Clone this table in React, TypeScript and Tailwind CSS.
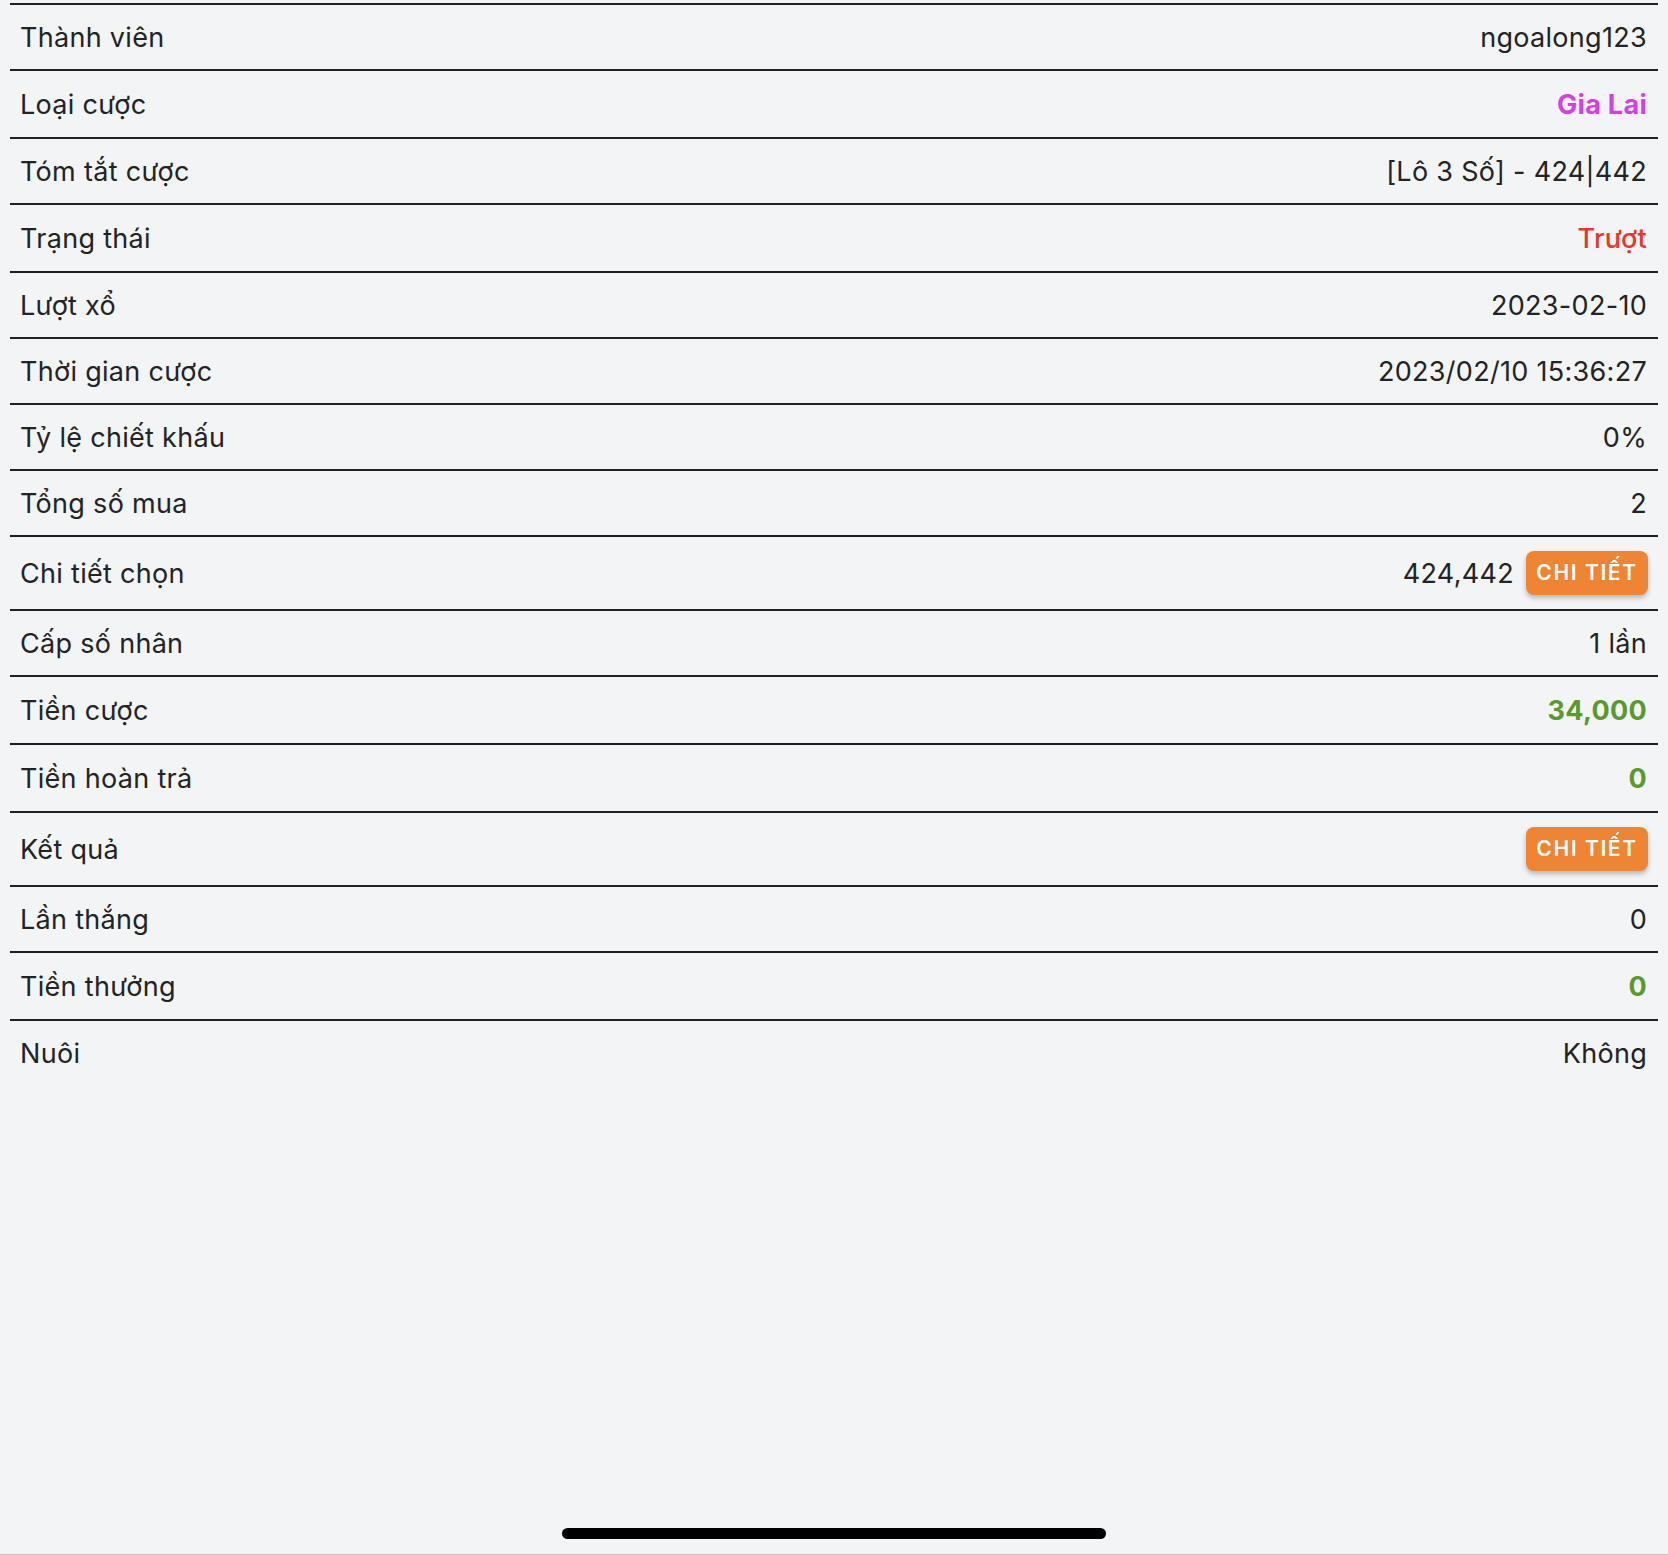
import React from "react";

type Row = {
  label: string;
  value?: string;
  valueClass?: string;
  button?: boolean;
  h: string;
};

const rows: Row[] = [
  { label: "Thành viên", value: "ngoalong123", h: "h-[66px]" },
  { label: "Loại cược", value: "Gia Lai", valueClass: "font-bold text-[#d83ee6]", h: "h-[68px]" },
  { label: "Tóm tắt cược", value: "[Lô 3 Số] - 424|442", h: "h-[66px]" },
  { label: "Trạng thái", value: "Trượt", valueClass: "font-medium text-[#e6392c]", h: "h-[68px]" },
  { label: "Lượt xổ", value: "2023-02-10", h: "h-[66px]" },
  { label: "Thời gian cược", value: "2023/02/10 15:36:27", h: "h-[66px]" },
  { label: "Tỷ lệ chiết khấu", value: "0%", h: "h-[66px]" },
  { label: "Tổng số mua", value: "2", h: "h-[66px]" },
  { label: "Chi tiết chọn", value: "424,442", button: true, h: "h-[74px]" },
  { label: "Cấp số nhân", value: "1 lần", h: "h-[66px]" },
  { label: "Tiền cược", value: "34,000", valueClass: "font-bold text-[#5a9a2c]", h: "h-[68px]" },
  { label: "Tiền hoàn trả", value: "0", valueClass: "font-bold text-[#5a9a2c]", h: "h-[68px]" },
  { label: "Kết quả", button: true, h: "h-[74px]" },
  { label: "Lần thắng", value: "0", h: "h-[66px]" },
  { label: "Tiền thưởng", value: "0", valueClass: "font-bold text-[#5a9a2c]", h: "h-[68px]" },
  { label: "Nuôi", value: "Không", h: "h-[66px]" },
];

export default function App() {
  return (
    <div
      className="w-[1668px] h-[1555px] bg-[#f3f4f6] flex flex-col text-[#222326] border-b border-[#c4c4c4]"
      style={{ fontFamily: "Inter, 'Noto Sans', sans-serif" }}
    >
      <div className="px-[10px] pt-[3px]">
        {rows.map((r, i) => (
          <div
            key={i}
            className={`flex items-center justify-between border-t-2 border-[#1f2024] pl-[10px] pr-[11px] ${r.h}`}
          >
            <span className="text-[27px] leading-none tracking-[0.3px]">{r.label}</span>
            <div className="flex items-center gap-[12px]">
              {r.value !== undefined && (
                <span className={`text-[27px] leading-none tracking-[0.3px] ${r.valueClass ?? ""}`}>{r.value}</span>
              )}
              {r.button && (
                <button className="h-[44px] w-[122px] mr-[-1px] rounded-[8px] bg-[#ef8533] text-white text-[21px] font-semibold tracking-[1.6px] shadow-[0_3px_5px_rgba(0,0,0,0.25)] flex items-center justify-center">
                  CHI TIẾT
                </button>
              )}
            </div>
          </div>
        ))}
      </div>
      <div className="flex-1" />
      <div className="flex justify-center pb-[15px]">
        <div className="w-[544px] h-[11px] rounded-full bg-black" />
      </div>
    </div>
  );
}
